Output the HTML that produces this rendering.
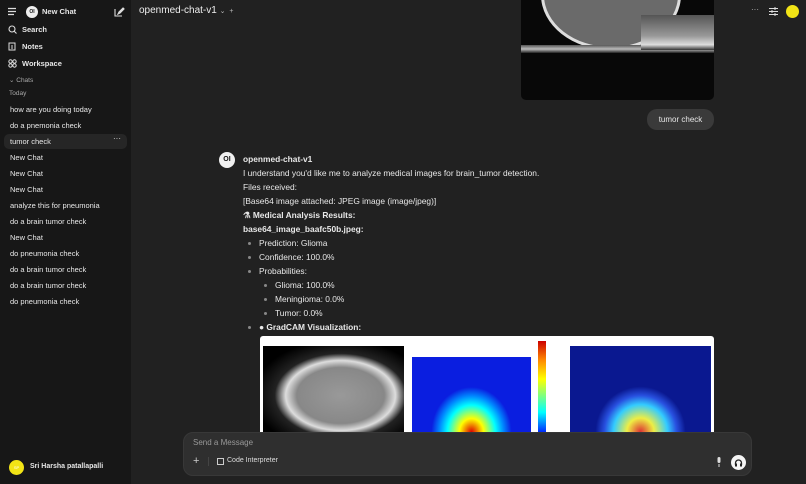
<!DOCTYPE html>
<html><head><meta charset="utf-8"><style>
*{box-sizing:border-box;margin:0;padding:0}
body{width:806px;height:484px;overflow:hidden;background:#212121;font-family:"Liberation Sans",sans-serif;color:#e6e6e6;position:relative;font-size:8px}
.sb{position:absolute;left:0;top:0;width:131px;height:484px;background:#171717}
.t{position:absolute;white-space:nowrap}
.b{font-weight:bold}
.item{position:absolute;left:10px;font-size:7.5px;color:#e8e8e8;white-space:nowrap}
.msg{font-size:8.4px;color:#e8e8e8}
.dot{position:absolute;width:3px;height:3px;border-radius:50%;background:#888}
</style></head><body>
<div class="sb">
 <svg class="t" style="left:7px;top:7px" width="10" height="9"><path d="M1 1.5h8M1 4.5h8M1 7.5h6" stroke="#ddd" stroke-width="1.2"/></svg>
 <div class="t" style="left:26px;top:6px;width:12px;height:12px;border-radius:50%;background:#eee;color:#111;font-size:5px;font-weight:bold;text-align:center;line-height:12px">OI</div>
 <div class="t b" style="left:42px;top:7px;font-size:7.5px">New Chat</div>
 <svg class="t" style="left:114px;top:6px" width="11" height="11"><path d="M1 3v7h7M5 7l5-5M4 8l1-2 4-4 1 1-4 4z" stroke="#ddd" fill="none" stroke-width="1.1"/></svg>
 <svg class="t" style="left:8px;top:25px" width="9" height="9"><circle cx="4" cy="4" r="3" stroke="#ddd" fill="none" stroke-width="1.1"/><path d="M6 6l2.5 2.5" stroke="#ddd" stroke-width="1.1"/></svg>
 <div class="t b" style="left:22px;top:25px;font-size:7.5px">Search</div>
 <svg class="t" style="left:8px;top:42px" width="8" height="9"><rect x="1" y="1" width="6" height="7" stroke="#ddd" fill="none"/><path d="M3 4h2M3 6h2" stroke="#ddd"/></svg>
 <div class="t b" style="left:22px;top:42px;font-size:7.5px">Notes</div>
 <svg class="t" style="left:8px;top:59px" width="9" height="9"><circle cx="2.5" cy="2.5" r="1.7" stroke="#ddd" fill="none"/><circle cx="6.5" cy="2.5" r="1.7" stroke="#ddd" fill="none"/><circle cx="2.5" cy="6.5" r="1.7" stroke="#ddd" fill="none"/><circle cx="6.5" cy="6.5" r="1.7" stroke="#ddd" fill="none"/></svg>
 <div class="t b" style="left:22px;top:59px;font-size:7.5px">Workspace</div>
 <div class="t" style="left:9px;top:76px;font-size:6.5px;color:#aaa">⌄ Chats</div>
 <div class="t" style="left:9px;top:90px;font-size:6.5px;color:#aaa">Today</div>
 <div style="position:absolute;left:4px;top:134px;width:123px;height:15px;border-radius:5px;background:#262626"></div>
 <div class="item" style="top:105px">how are you doing today</div>
 <div class="item" style="top:121px">do a pnemonia check</div>
 <div class="item" style="top:137px">tumor check</div>
 <div class="t" style="left:113px;top:134px;font-size:8px;color:#ddd">···</div>
 <div class="item" style="top:153px">New Chat</div>
 <div class="item" style="top:169px">New Chat</div>
 <div class="item" style="top:185px">New Chat</div>
 <div class="item" style="top:201px">analyze this for pneumonia</div>
 <div class="item" style="top:217px">do a brain tumor check</div>
 <div class="item" style="top:233px">New Chat</div>
 <div class="item" style="top:249px">do pneumonia check</div>
 <div class="item" style="top:265px">do a brain tumor check</div>
 <div class="item" style="top:281px">do a brain tumor check</div>
 <div class="item" style="top:297px">do pneumonia check</div>
 <div class="t" style="left:9px;top:460px;width:15px;height:15px;border-radius:50%;background:#f2e416;font-size:4px;color:#fff;text-align:center;line-height:15px">SP</div>
 <div class="t b" style="left:30px;top:463px;font-size:7px">Sri Harsha patallapalli</div>
</div>
<div class="t" style="left:139px;top:5px;font-size:10px;color:#eee">openmed-chat-v1 <span style="font-size:7px;color:#bbb">⌄ &nbsp;+</span></div>
<div class="t" style="left:751px;top:5px;font-size:8px;color:#bbb">···</div>
<svg class="t" style="left:769px;top:7px" width="9" height="9"><path d="M0 1.5h9M0 4.5h9M0 7.5h9" stroke="#ddd" stroke-width="1"/><rect x="5" y="0.5" width="2" height="2" fill="#ddd"/><rect x="2" y="3.5" width="2" height="2" fill="#ddd"/><rect x="5" y="6.5" width="2" height="2" fill="#ddd"/></svg>
<div class="t" style="left:786px;top:5px;width:13px;height:13px;border-radius:50%;background:#f2e416"></div>
<div class="t" style="left:521px;top:0;width:193px;height:100px;border-radius:0 0 5px 5px;background:#080808;overflow:hidden">
 <div style="position:absolute;left:20px;top:-60px;width:140px;height:110px;border-radius:50%;border:3px solid #ddd;background:#6a6a6a"></div>
 <div style="position:absolute;left:0;top:45px;width:193px;height:8px;background:linear-gradient(180deg,#555,#bbb,#222)"></div>
 <div style="position:absolute;left:120px;top:15px;width:73px;height:35px;background:linear-gradient(180deg,#555,#999 60%,#ddd 85%,#333)"></div>
</div>
<div class="t" style="left:647px;top:109px;width:67px;height:21px;border-radius:10px;background:#3a3a3a;font-size:8px;text-align:center;line-height:21px">tumor check</div>
<div class="t" style="left:219px;top:152px;width:16px;height:16px;border-radius:50%;background:#f0f0f0;color:#111;font-size:7px;font-weight:bold;text-align:center;line-height:16px">OI</div>
<div class="t b msg" style="left:243px;top:154px">openmed-chat-v1</div>
<div class="t msg" style="left:243px;top:168px">I understand you'd like me to analyze medical images for brain_tumor detection.</div>
<div class="t msg" style="left:243px;top:182px">Files received:</div>
<div class="t msg" style="left:243px;top:196px">[Base64 image attached: JPEG image (image/jpeg)]</div>
<div class="t b msg" style="left:243px;top:210px">⚗ Medical Analysis Results:</div>
<div class="t b msg" style="left:243px;top:224px">base64_image_baafc50b.jpeg:</div>
<div class="dot" style="left:248px;top:242px"></div><div class="t msg" style="left:259px;top:238px">Prediction: Glioma</div>
<div class="dot" style="left:248px;top:256px"></div><div class="t msg" style="left:259px;top:252px">Confidence: 100.0%</div>
<div class="dot" style="left:248px;top:270px"></div><div class="t msg" style="left:259px;top:266px">Probabilities:</div>
<div class="dot" style="left:264px;top:284px"></div><div class="t msg" style="left:275px;top:280px">Glioma: 100.0%</div>
<div class="dot" style="left:264px;top:298px"></div><div class="t msg" style="left:275px;top:294px">Meningioma: 0.0%</div>
<div class="dot" style="left:264px;top:312px"></div><div class="t msg" style="left:275px;top:308px">Tumor: 0.0%</div>
<div class="dot" style="left:248px;top:326px"></div><div class="t b msg" style="left:259px;top:322px">● GradCAM Visualization:</div>
<div class="t" style="left:260px;top:336px;width:454px;height:100px;background:#fff;border-radius:3px;overflow:hidden">
 <div style="position:absolute;left:3px;top:10px;width:141px;height:90px;background:radial-gradient(ellipse at 55% 55%,#999 0,#888 40%,#ddd 50%,#222 60%,#000 80%)"></div>
 <div style="position:absolute;left:152px;top:21px;width:119px;height:79px;background:radial-gradient(ellipse 40px 45px at 50% 95%,#d00 0,#ff0 30%,#0ff 60%,#08f 80%,#0a1ee0 100%)"></div>
 <div style="position:absolute;left:278px;top:5px;width:8px;height:95px;background:linear-gradient(180deg,#c00,#f80 20%,#ff0 40%,#0ff 75%,#00f)"></div>
 <div style="position:absolute;left:310px;top:10px;width:141px;height:90px;background:radial-gradient(ellipse 45px 45px at 50% 95%,#d33 0,#ee4 30%,#3cf 60%,#2850e0 80%,#0a1890 100%)"></div>
</div>
<div class="t" style="left:183px;top:432px;width:569px;height:44px;border-radius:10px;background:#2f2f2f;border:1px solid #383838"></div>
<div class="t" style="left:193px;top:438px;font-size:8px;color:#999">Send a Message</div>
<div class="t" style="left:193px;top:455px;font-size:11px;color:#ccc">+</div>
<div class="t" style="left:208px;top:457px;width:1px;height:9px;background:#444"></div>
<svg class="t" style="left:217px;top:458px" width="7" height="7"><rect x="0.5" y="0.5" width="6" height="6" stroke="#ccc" fill="none"/></svg>
<div class="t" style="left:227px;top:457px;font-size:7px;color:#ddd">Code Interpreter</div>
<svg class="t" style="left:716px;top:457px" width="6" height="10"><rect x="1.5" y="0" width="3" height="6" rx="1.5" fill="#ddd"/><path d="M3 7v3" stroke="#ddd"/></svg>
<div class="t" style="left:731px;top:455px;width:15px;height:15px;border-radius:50%;background:#f5f5f5"></div>
<svg class="t" style="left:734px;top:458px" width="9" height="9"><path d="M1.5 7V5a3 3 0 0 1 6 0v2" stroke="#222" fill="none" stroke-width="1.3"/><rect x="1" y="5.5" width="2" height="3" fill="#222"/><rect x="6" y="5.5" width="2" height="3" fill="#222"/></svg>
</body></html>
